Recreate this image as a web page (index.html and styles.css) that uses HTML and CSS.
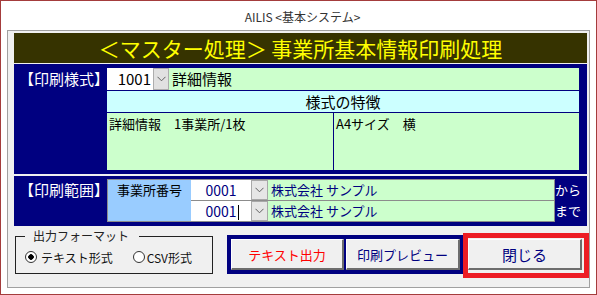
FILE: index.html
```html
<!DOCTYPE html>
<html lang="ja">
<head>
    <meta charset="UTF-8">
    <meta name="viewport" content="width=device-width, initial-scale=1.0">
    <title>AILIS 基本システム</title>
    <link rel="stylesheet" href="styles.css">
</head>
<body>
    <div class="window">
        <div class="caption">AILIS &lt;基本システム&gt;</div>
        <div class="panel">
            <div class="title">＜マスター処理＞ 事業所基本情報印刷処理</div>

            <div class="sect sect-style">
                <div class="sect-label">【印刷様式】</div>
                <div class="sect-body">
                    <div class="style-row">
                        <div class="combo-value">1001</div>
                        <div class="drop"><svg width="9" height="6" viewBox="0 0 9 6"><path d="M0.5 0.8 L4.5 4.8 L8.5 0.8" fill="none" stroke="#606060" stroke-width="1"/></svg></div>
                        <div class="style-name">詳細情報</div>
                    </div>
                    <div class="feature-head">様式の特徴</div>
                    <div class="feature-body">
                        <div class="feature-cell cell-left">詳細情報　1事業所/1枚</div>
                        <div class="feature-cell">A4サイズ　横</div>
                    </div>
                </div>
            </div>

            <div class="sect sect-range">
                <div class="sect-label">【印刷範囲】</div>
                <div class="range-table">
                    <div class="range-head">事業所番号</div>
                    <div class="range-rows">
                        <div class="range-row first">
                            <div class="code">0001</div>
                            <div class="drop drop-range"><svg width="9" height="6" viewBox="0 0 9 6"><path d="M0.5 0.8 L4.5 4.8 L8.5 0.8" fill="none" stroke="#606060" stroke-width="1"/></svg></div>
                            <div class="office">株式会社 サンプル</div>
                        </div>
                        <div class="range-row">
                            <div class="code">0001<span class="caret"></span></div>
                            <div class="drop drop-range"><svg width="9" height="6" viewBox="0 0 9 6"><path d="M0.5 0.8 L4.5 4.8 L8.5 0.8" fill="none" stroke="#606060" stroke-width="1"/></svg></div>
                            <div class="office">株式会社 サンプル</div>
                        </div>
                    </div>
                </div>
                <div class="range-marks">
                    <div>から</div>
                    <div>まで</div>
                </div>
            </div>

            <div class="actions">
                <fieldset class="format">
                    <legend>出力フォーマット</legend>
                    <div class="radios">
                        <label class="radio"><span class="dot on"></span>テキスト形式</label>
                        <label class="radio radio-csv"><span class="dot"></span>CSV形式</label>
                    </div>
                </fieldset>
                <div class="btn-group">
                    <div class="btn btn-text">テキスト出力</div>
                    <div class="btn btn-preview">印刷プレビュー</div>
                </div>
                <div class="focus-frame">
                    <div class="btn btn-close">閉じる</div>
                </div>
            </div>
        </div>
    </div>
</body>
</html>
```

FILE: styles.css
```css
body {
    margin: 0;
    padding: 0;
    font-family: "Noto Sans CJK JP", "Noto Sans", sans-serif;
    background: #fff;
}

.window {
    width: 597px;
    height: 295px;
    box-sizing: border-box;
    border: 1px solid #a43c3c;
    background: #fff;
    display: flex;
    flex-direction: column;
    overflow: hidden;
}

.caption {
    height: 27px;
    padding: 2px 0 0 8px;
    line-height: 27px;
    font-size: 12px;
    color: #333;
    text-align: center;
}

.panel {
    margin: 0 6px;
    height: 258px;
    box-sizing: border-box;
    border: 1px solid #a0a0a0;
    background: #f0f0f0;
    padding: 2px 2px 0 6px;
    display: flex;
    flex-direction: column;
}

.title {
    height: 30px;
    line-height: 30px;
    background: #363300;
    color: #ffff00;
    font-size: 21px;
    text-align: center;
}

.sect {
    background: #000080;
    display: flex;
}

.sect-label {
    width: 93px;
    flex-shrink: 0;
    box-sizing: border-box;
    padding-left: 7px;
    display: flex;
    justify-content: center;
    align-items: flex-start;
    color: #fff;
    font-size: 15px;
    line-height: 22px;
    white-space: nowrap;
    font-feature-settings: "halt";
}

/* 印刷様式 */
.sect-style {
    margin-top: 1px;
    padding: 4px 8px 4px 0;
}

.sect-body {
    width: 472px;
}

.style-row {
    height: 22px;
    display: flex;
    background: #ccffcc;
    line-height: 22px;
    font-size: 15px;
}

.combo-value {
    width: 46px;
    box-sizing: border-box;
    padding-right: 2px;
    background: #fff;
    text-align: right;
}

.drop {
    width: 16px;
    box-sizing: border-box;
    background: #e1e1e1;
    border: 1px solid #adadad;
    display: flex;
    align-items: center;
    justify-content: center;
}

.style-name {
    padding-left: 3px;
}

.feature-head {
    height: 21px;
    line-height: 21px;
    border-top: 1px solid #000080;
    border-bottom: 1px solid #000080;
    background: #ccffff;
    font-size: 15px;
    text-align: center;
}

.feature-body {
    height: 57px;
    display: grid;
    grid-template-columns: 227px 1fr;
    background: #ccffcc;
}

.feature-cell {
    padding: 3px 2px;
    font-size: 13px;
    line-height: 16px;
}

.cell-left {
    border-right: 1px solid #000080;
}

/* 印刷範囲 */
.sect-range {
    margin-top: 2px;
    padding: 3px 0 4px 0;
}

.range-table {
    width: 448px;
    box-sizing: border-box;
    border: 1px solid #8c8c8c;
    display: flex;
}

.range-head {
    width: 83px;
    background: #99ccff;
    font-size: 13px;
    line-height: 20px;
    text-align: center;
}

.range-rows {
    flex: 1;
}

.range-row {
    height: 20px;
    display: flex;
}

.range-row.first {
    border-bottom: 1px solid #8c8c8c;
}

.code {
    width: 60px;
    background: #fff;
    color: #000080;
    font-size: 14px;
    line-height: 20px;
    text-align: center;
}

.caret {
    display: inline-block;
    width: 1px;
    height: 15px;
    margin: 0 -2px 0 1px;
    background: #000;
    vertical-align: -3px;
}

.drop-range {
    width: 17px;
    background: #e6e6e6;
    border-color: #a8a8a8;
}

.office {
    flex: 1;
    background: #ccffcc;
    color: #000080;
    padding-left: 3px;
    font-size: 13px;
    line-height: 20px;
}

.range-marks {
    width: 32px;
    color: #fff;
    font-size: 13px;
    line-height: 21px;
}

/* 下部ボタン */
.actions {
    flex: 1;
    display: flex;
    align-items: flex-start;
}

.format {
    margin: 3px 0 0 1px;
    width: 198px;
    box-sizing: border-box;
    padding: 6px 0 8px 9px;
    border: 1px solid #222;
    flex-shrink: 0;
}

.format legend {
    font-size: 12px;
    line-height: 14px;
    padding: 0 10px 0 8px;
    color: #222;
}

.radios {
    display: flex;
    height: 16px;
    align-items: center;
    font-size: 12px;
    color: #111;
}

.radio {
    display: flex;
    align-items: center;
}

.radio-csv {
    margin-left: 20px;
}

.dot {
    width: 12px;
    height: 12px;
    box-sizing: border-box;
    border: 1px solid #333;
    border-radius: 50%;
    background: #fff;
    margin-right: 4px;
}

.radio-csv .dot {
    margin-right: 2px;
}

.dot.on {
    background: radial-gradient(circle, #000 0 2.5px, #fff 3px);
}

.btn-group {
    margin: 9px 0 0 14px;
    padding: 4px 3px 4px 4px;
    background: #000080;
    display: flex;
    gap: 2px;
    flex-shrink: 0;
}

.btn {
    width: 113px;
    height: 31px;
    box-sizing: border-box;
    background: #f0f0f0;
    border-style: solid;
    border-width: 1px 2px 2px 1px;
    border-color: #fff #6d6d6d #6d6d6d #fff;
    display: flex;
    align-items: center;
    justify-content: center;
    font-size: 13px;
    color: #000080;
}

.btn-text {
    color: #ff0000;
}

.btn-preview {
    width: 114px;
}

.focus-frame {
    margin-top: 7px;
    border: 5px solid #ed1c24;
    padding: 1px 2px 3px 0;
    flex-shrink: 0;
}

.btn-close {
    width: 114px;
    font-size: 15px;
}
```
